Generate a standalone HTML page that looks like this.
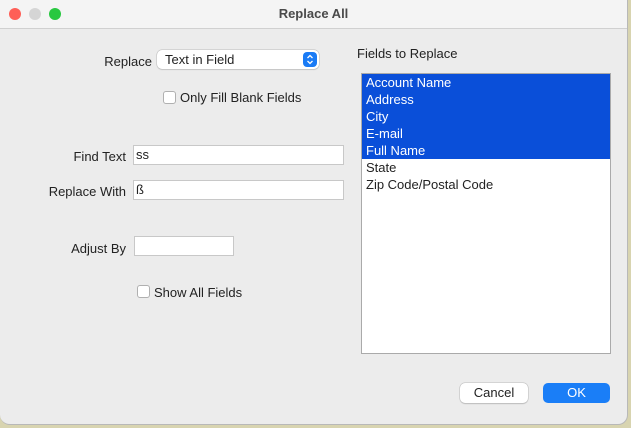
<!DOCTYPE html>
<html><head><style>
body{margin:0;width:631px;height:428px;background:#d8d4b0;position:relative;overflow:hidden;font-family:"Liberation Sans",sans-serif;font-size:13px;color:#222}
.win{position:absolute;left:0;top:0;width:627px;height:424px;background:#ececec;border-radius:0 0 10px 10px;border-right:1px solid #b8b8b8;border-bottom:1px solid #b8b8b8}
.tb{position:absolute;left:0;top:0;width:627px;height:28px;background:#f4f4f4;border-bottom:1px solid #d0d0d0;text-align:center;line-height:28px;font-weight:bold;color:#4a4a4a;font-size:13px}
.dot{position:absolute;top:8px;width:12px;height:12px;border-radius:50%}
.a{position:absolute}
.lbl{position:absolute;text-align:right}
.inp{position:absolute;background:#fff;border:1px solid #c8c8c8;box-sizing:border-box;padding-left:2px;line-height:18px}
.cb{position:absolute;width:13px;height:13px;background:#fff;border:1px solid #b0b0b0;border-radius:3px;box-sizing:border-box}
.list{position:absolute;left:361px;top:73px;width:250px;height:281px;background:#fff;border:1px solid #aaa;box-sizing:border-box}
.row{height:17px;line-height:18px;padding-left:4px}
.sel{background:#0a4fd9;color:#fff}
</style></head><body>
<div class="win">
<div class="tb">Replace All
<div class="dot" style="left:9px;background:#fe5f57"></div>
<div class="dot" style="left:29px;background:#d5d5d5"></div>
<div class="dot" style="left:49px;background:#28c840"></div>
</div>
<div class="lbl" style="left:60px;width:92px;top:54px">Replace</div>
<div class="a" style="left:157px;top:50px;width:162px;height:19px;background:#fff;border-radius:5px;box-shadow:0 0 0 0.5px #bbb,0 1px 1px #ccc;line-height:19px;padding-left:8px;box-sizing:border-box">Text in Field
<svg class="a" style="right:2px;top:2px" width="14" height="15"><rect width="14" height="15" rx="4" fill="#1a7bf5"/><path d="M4.5 6 L7 3.5 L9.5 6 M4.5 9 L7 11.5 L9.5 9" stroke="#fff" stroke-width="1.3" fill="none"/></svg></div>
<div class="cb" style="left:163px;top:91px"></div>
<div class="a" style="left:180px;top:90px">Only Fill Blank Fields</div>
<div class="lbl" style="left:30px;width:96px;top:149px">Find Text</div>
<div class="inp" style="left:133px;top:145px;width:211px;height:20px">ss</div>
<div class="lbl" style="left:30px;width:96px;top:184px">Replace With</div>
<div class="inp" style="left:133px;top:180px;width:211px;height:20px">ß</div>
<div class="lbl" style="left:30px;width:96px;top:241px">Adjust By</div>
<div class="inp" style="left:134px;top:236px;width:100px;height:20px"></div>
<div class="cb" style="left:137px;top:285px"></div>
<div class="a" style="left:154px;top:285px">Show All Fields</div>
<div class="a" style="left:357px;top:46px">Fields to Replace</div>
<div class="list">
<div class="row sel">Account Name</div><div class="row sel">Address</div><div class="row sel">City</div><div class="row sel">E-mail</div><div class="row sel">Full Name</div><div class="row">State</div><div class="row">Zip Code/Postal Code</div>
</div>
<div class="a" style="left:460px;top:383px;width:68px;height:20px;background:#fff;border-radius:5px;box-shadow:0 0 0 0.5px #bbb,0 1px 1px #bbb;text-align:center;line-height:20px;font-size:13px">Cancel</div>
<div class="a" style="left:543px;top:383px;width:67px;height:20px;background:#1a7ef7;border-radius:5px;text-align:center;line-height:20px;color:#fff;font-size:13px">OK</div>
</div>
</body></html>
